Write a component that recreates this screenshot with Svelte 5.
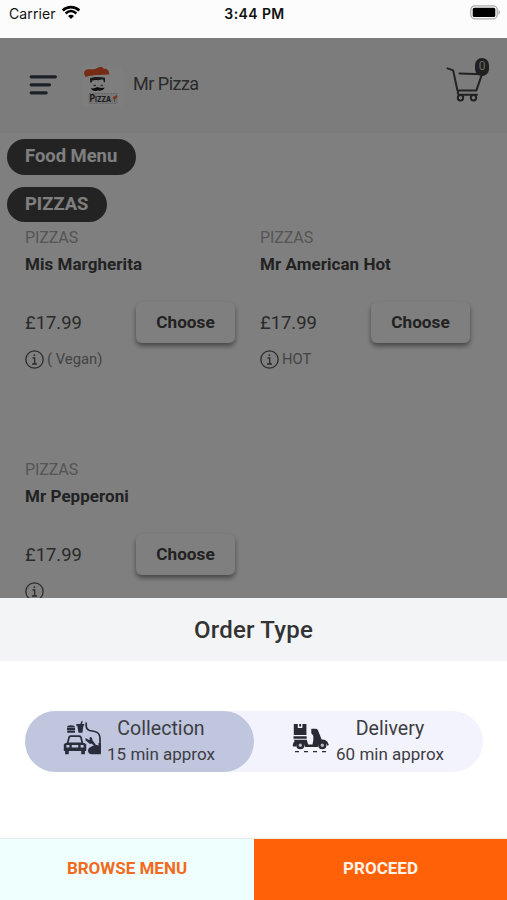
<script>
  const products = [
    { category: "PIZZAS", name: "Mis Margherita", price: "£17.99", info: "( Vegan)" },
    { category: "PIZZAS", name: "Mr American Hot", price: "£17.99", info: "HOT" },
    { category: "PIZZAS", name: "Mr Pepperoni", price: "£17.99", info: "" },
  ];

  let cartCount = 0;
  let orderType = "collection";
</script>

<div class="screen">
  <div class="status-bar">
    <div class="carrier">
      <span>Carrier</span>
      <svg width="18" height="14" viewBox="0 0 18 14">
        <path d="M.7 5.400C5.400 1 12.600 1 17.300 5.400" fill="none" stroke="#000" stroke-width="2.700" />
        <path d="M3.600 8.500C7 5.500 11 5.500 14.400 8.500" fill="none" stroke="#000" stroke-width="2.400" />
        <path d="M6 11C7.800 9.400 10.200 9.400 12 11L9 14Z" />
      </svg>
    </div>
    <div class="time">3:44 PM</div>
    <svg class="battery" width="31" height="15" viewBox="0 0 31 15">
      <rect x=".8" y=".8" width="26.400" height="13" rx="4" fill="#fff" stroke="#aaa" stroke-width="1.300" />
      <rect x="2.700" y="2.700" width="22.600" height="9.300" rx="1.500" />
      <path d="M28.500 4.800q3 2.600 0 5.200z" fill="#aaa" />
    </svg>
  </div>

  <main class="page">
    <header>
      <svg class="menu-icon" width="28" height="22" viewBox="0 0 28 22">
        <path d="M2.200 2.800H26.400M2.200 10.800H20.500M2.200 18.800H17.200" stroke="#3c4050" stroke-width="3.200" stroke-linecap="round" />
      </svg>
      <div class="logo">
        <svg width="40" height="40" viewBox="0 0 40 40">
          <rect width="40" height="40" fill="#fcfcfc" />
          <path d="M2.500 11C.5 8 .5 4.500 4 3.500c4-.8 6 .3 9-.8 3-2 6-2.500 8 .2 4-.4 5 2.500 5.300 5.600C22 8.700 20 8.500 16.500 9 11.500 9 7 9.500 2.500 11Z" fill="#ed5824" />
          <path d="M7 12.300c4-1.500 10-1.500 15-.5v4.500h-1.200l-.6-2.700c-2-.6-3.500.6-5.700.6-2-.5-3-.1-5.300.4l-.5 2H7.200Z" fill="#333" />
          <path d="M10.500 19.500h2.500M17.500 19.500h2.500" stroke="#666" stroke-width="1.300" />
          <path d="M7.800 22c2 .8 4 .4 6.700-1 2.500 1 5 1.200 7.200.6-1 3-4.500 3.300-7 3-3 .8-6 .2-6.900-2.600Z" fill="#181818" />
          <path d="M6 27.500h28v10H6Z" fill="#eee" stroke="#bbb" stroke-width=".7" stroke-dasharray="2 1" />
          <text x="6.500" y="35.800" textLength="21.500" lengthAdjust="spacingAndGlyphs">P<tspan class="small-caps">IZZA</tspan></text>
          <path d="M29.500 31.500l4-2.500 1 2-3 3Z" fill="#ed6b3d" />
          <path d="M31 33.500l1 2.500" stroke="#85a75d" />
        </svg>
      </div>
      <h1>Mr Pizza</h1>
      <div class="cart">
        <svg width="40" height="40" viewBox="0 0 40 40" fill="none" stroke="#444" stroke-width="2" stroke-linecap="round" stroke-linejoin="round">
          <path d="M.5 9.400l5.700 2 4.200 20h19l5.600-16.200-22.500-.8M11.500 31.600q-2 3.300 1 4.200h17.500" />
          <circle cx="13.500" cy="38.700" r="2.700" />
          <circle cx="26.500" cy="38.700" r="2.700" />
        </svg>
        <span class="badge">{cartCount}</span>
      </div>
    </header>

    <div class="pills">
      <span class="pill">Food Menu</span>
      <span class="pill">PIZZAS</span>
    </div>

    <div class="products">
      {#each products as product}
        <article>
          <div class="category">{product.category}</div>
          <h2>{product.name}</h2>
          <div class="buy">
            <span class="price">{product.price}</span>
            <button class="choose">Choose</button>
          </div>
          <div class="info">
            <svg width="19" height="19" viewBox="0 0 19 19" fill="none" stroke="#555" stroke-width="1.300">
              <circle cx="9.500" cy="9.500" r="8.700" />
              <path d="M7.500 8h2.200v6M7 14h5" />
              <circle cx="9.400" cy="5.100" r=".9" fill="#555" stroke="none" />
            </svg>
            <span>{product.info}</span>
          </div>
        </article>
      {/each}
    </div>
    <div class="backdrop"></div>
  </main>

  <section class="sheet">
    <h3>Order Type</h3>
    <div class="sheet-body">
      <div class="toggle">
        <button
          class="option"
          class:selected={orderType === "collection"}
          on:click={() => (orderType = "collection")}
        >
          <svg width="38" height="38" viewBox="0 0 38 38" fill="#292d3b">
            <path d="M4 5.500q0-2.300 4-2.300t4 2.300ZM4 6h8v2H4ZM4.200 8.500h7.800v2.200H4.200Z" />
            <path d="M13.300 2h3.900l1.500-3 1.200.5L18.900 2h2.300v1.800h-.8l-1 6.900h-3.900l-1.200-6.900h-1Z" />
            <path d="M23.200.5v3q0 4 3.500 5l5 1q5 1 5.300 6.500V31" fill="none" stroke="#292d3b" stroke-width="1.700" />
            <path fill-rule="evenodd" d="M.8 22.500q1-1.700 3-1.700l1.400-5.600q.5-1.900 2.300-1.900h9q1.800 0 2.300 1.900l1.400 5.600q2 0 3 1.700V29h-1.300v3.200h-3.700V29H5.800v3.200H2.100V29H.8ZM5.600 20.500h12.800l-1.200-4.600q-.3-.8-1.200-.8H8q-.9 0-1.200.8ZM3.400 23v2.600h3V23ZM17.600 23v2.600h3V23ZM8.700 23v2.500h6.600V23Z" />
            <path d="M22.500 16l4 2.200.3-3.200 2 .5.8 3 3.200 4.200 2.700.8V21h2.300v11.200H28q-2.900-.5-3-3.600.2-3.200 3.600-4.200l2.300-1-2.400-2-1.500.5-4.500-3.600Z" />
          </svg>
          <span class="label">
            <span class="title">Collection</span>
            <span class="wait">15 min approx</span>
          </span>
        </button>
        <button
          class="option delivery"
          class:selected={orderType === "delivery"}
          on:click={() => (orderType = "delivery")}
        >
          <svg width="38" height="38" viewBox="0 0 38 38" fill="#292a32">
            <path d="M1.800 4h4v4h4.600V4h4v11H1.800Z" />
            <path d="M7.200 4h1.900v2.500H7.200ZM1.500 16.200h13.200v2.600H1.500ZM2 19.800h12.700l1.500 4.700h4.300l.8-4.200v-4.500l-2-2.500V8.700h4.500q1.800 0 2.300 1.800l3.500 9q5-.3 6.400 3.500l.8 2-1.500.7q-1-3.200-4.500-3.200-4 0-5 4.500H13q-1-4.500-5-4.200-3.300.4-4 3.700H.8q0-4 1.700-5Z" />
            <circle cx="8.300" cy="25.200" r="2.900" fill="#b9bac4" stroke="#292a32" stroke-width="2.400" />
            <circle cx="30.300" cy="25.200" r="2.900" fill="#b9bac4" stroke="#292a32" stroke-width="2.400" />
            <path d="M3 31.600h31" stroke="#292a32" stroke-width="1.300" stroke-dasharray="4 5" />
          </svg>
          <span class="label">
            <span class="title">Delivery</span>
            <span class="wait">60 min approx</span>
          </span>
        </button>
      </div>
    </div>
    <footer>
      <button class="browse">BROWSE MENU</button>
      <button class="proceed">PROCEED</button>
    </footer>
  </section>
</div>

<style>
  :global(body) {
    margin: 0;
  }

  .screen {
    display: flex;
    flex-direction: column;
    width: 507px;
    height: 900px;
    overflow: hidden;
    font-family: Roboto, sans-serif;
    background: #fff;
  }

  svg {
    display: block;
    flex: none;
    overflow: visible;
  }

  h1,
  h2,
  h3 {
    margin: 0;
  }

  button {
    border: 0;
    padding: 0;
    font-family: inherit;
    cursor: pointer;
  }

  .status-bar {
    display: grid;
    grid-template-columns: 1fr auto 1fr;
    flex: none;
    box-sizing: border-box;
    height: 38px;
    padding: 5px 6px 0 9px;
    font: 14px/18px Inter, sans-serif;
    background: #fcfcfc;
    color: #111;
  }

  .carrier {
    display: flex;
    gap: 6px;
    letter-spacing: 0.1px;
  }

  .time {
    font-weight: 600;
    letter-spacing: 0.4px;
    padding-right: 1px;
  }

  .battery {
    justify-self: end;
  }

  .page {
    position: relative;
    flex: none;
    height: 560px;
    overflow: hidden;
    background: #fff;
  }

  .backdrop {
    position: absolute;
    inset: 0;
    background: rgba(0, 0, 0, 0.5);
  }

  header {
    display: flex;
    align-items: center;
    box-sizing: border-box;
    height: 94px;
    padding: 0 20px 0 29px;
    background: #f8f8f8;
    box-shadow: 0 1px 1px #f8f8f8;
  }

  .logo {
    margin: 2px 10px 0 26px;
  }

  .logo text {
    font: 700 10px Inter, sans-serif;
    fill: #333;
  }

  .logo .small-caps {
    font-size: 8px;
  }

  h1 {
    flex: 1;
    padding-bottom: 3px;
    font-size: 18px;
    font-weight: 400;
    letter-spacing: -0.5px;
    color: #555;
  }

  .cart {
    position: relative;
    margin-bottom: 12px;
  }

  .badge {
    position: absolute;
    top: -1px;
    right: -2px;
    width: 14px;
    height: 18px;
    border-radius: 7px;
    background: #404040;
    color: #ccc;
    font: 12px/17px Roboto, sans-serif;
    text-align: center;
  }

  .pills {
    display: flex;
    flex-direction: column;
    align-items: flex-start;
    gap: 12px;
    padding: 7px 7px 0;
  }

  .pill {
    box-sizing: border-box;
    height: 35.500px;
    padding: 0 18.500px 0 18px;
    border-radius: 18px;
    background: #444;
    color: #fff;
    opacity: 0.98;
    font-size: 18.400px;
    font-weight: 700;
    line-height: 34px;
  }

  .products {
    display: grid;
    grid-template-columns: 210px 210px;
    grid-auto-rows: 232px;
    column-gap: 25px;
    padding: 5px 25px 0;
  }

  .category {
    font-size: 16px;
    line-height: 22px;
    letter-spacing: -0.1px;
    color: #aaa;
  }

  h2 {
    font-size: 17px;
    font-weight: 700;
    line-height: 30px;
    letter-spacing: 0.05px;
    color: #444;
  }

  .buy {
    display: flex;
    align-items: center;
    justify-content: space-between;
    margin-top: 23px;
  }

  .price {
    padding-bottom: 1px;
    font-size: 18.400px;
    color: #555;
  }

  .choose {
    width: 99px;
    height: 41px;
    padding-bottom: 2px;
    border-radius: 6px;
    background: #fff;
    box-shadow: 0 3px 5px rgba(0, 0, 0, 0.45);
    font-size: 17.200px;
    font-weight: 700;
    color: #444;
  }

  .info {
    display: flex;
    align-items: center;
    gap: 3px;
    height: 20px;
    margin-top: 6px;
    font-size: 14.800px;
    color: #888;
  }

  .sheet {
    display: flex;
    flex-direction: column;
    flex: 1;
    background: #fff;
  }

  h3 {
    height: 63px;
    background: #f2f4f6;
    font-size: 24px;
    font-weight: 500;
    line-height: 65px;
    letter-spacing: 0.2px;
    text-align: center;
    color: #333;
  }

  .sheet-body {
    flex: 1;
    padding: 50px 24px 0 25px;
  }

  .toggle {
    display: grid;
    grid-template-columns: 1fr 1fr;
    height: 61px;
    border-radius: 31px;
    background: #f3f3fd;
  }

  .option {
    display: flex;
    align-items: center;
    justify-content: center;
    gap: 6px;
    padding: 0 1px 2px 0;
    border-radius: 31px;
    background: none;
    color: #3d3d43;
  }

  .option.selected {
    background: #bfc6de;
  }

  .option.delivery svg {
    margin-bottom: 3px;
  }

  .label {
    display: flex;
    flex-direction: column;
    align-items: center;
  }

  .title {
    font-size: 19.600px;
    line-height: 26px;
  }

  .wait {
    font-size: 17px;
    line-height: 24px;
  }

  footer {
    display: grid;
    grid-template-columns: 254px 253px;
    height: 61px;
    border-top: 1px solid #e8eceb;
  }

  footer button {
    padding-bottom: 3px;
    font-size: 17px;
    font-weight: 700;
  }

  .browse {
    background: #effffe;
    color: #f26a1b;
  }

  .proceed {
    background: #ff6108;
    color: #fff3e8;
  }
</style>
